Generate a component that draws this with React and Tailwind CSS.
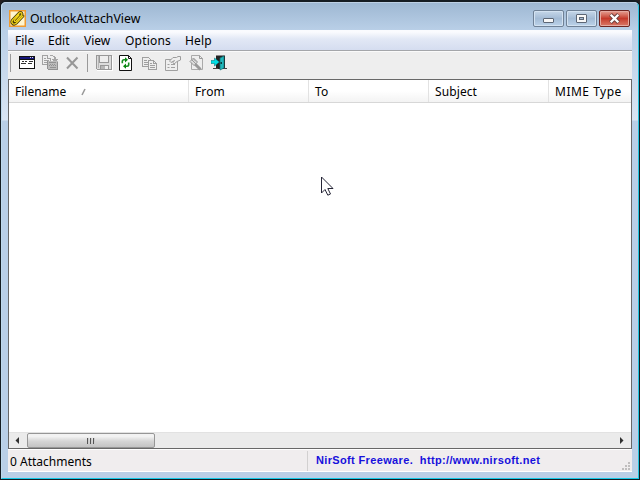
import React from "react";

const menus = [
  ["File", "w-[33px]"],
  ["Edit", "w-[36px]"],
  ["View", "w-[41px]"],
  ["Options", "w-[60px] tracking-[0.2px]"],
  ["Help", "w-[40px] tracking-[0.2px]"],
];

function PaperclipLogo() {
  return (
    <svg width="17" height="17" viewBox="0 0 17 17" className="mt-[3px] shrink-0">
      <rect x="0.75" y="0.75" width="15.5" height="15.5" fill="#fff5cf" stroke="#f09a2e" strokeWidth="1.5" />
      <g fill="none" strokeLinecap="round" strokeLinejoin="round">
        <path d="M10 5L5.8 9.6C4.5 11.2 6 12.2 7.2 11L12.3 5.5C14 3.3 12 1.6 10 3.2L3.8 9.6C1.4 12.6 4.3 15.6 7.2 13.2L14 6" stroke="#403500" strokeWidth="2.8" />
        <path d="M10 5L5.8 9.6C4.5 11.2 6 12.2 7.2 11L12.3 5.5C14 3.3 12 1.6 10 3.2L3.8 9.6C1.4 12.6 4.3 15.6 7.2 13.2L14 6" stroke="#f3d51c" strokeWidth="1.3" />
      </g>
    </svg>
  );
}

function WindowIcon() {
  return (
    <svg width="17" height="16" viewBox="0 0 17 16" shapeRendering="crispEdges">
      <path d="M0 1h16v13H0z" fill="#111" />
      <path d="M1 2h14v2H1z" fill="#16167c" />
      <path d="M1 5h14v8H1z" fill="#fff" />
      <path d="M11 2h1v1h-1zM13 2h1v1h-1z" fill="#ddd" />
      <path d="M3 6h2v1H3zM6 6h2v1H6zM2 8h5v1H2zM10 6h4v1h-4zM9 8h4v1H9z" fill="#333" />
    </svg>
  );
}

function SaveSelectedIcon() {
  return (
    <svg width="17" height="16" viewBox="0 0 17 16" shapeRendering="crispEdges">
      <path d="M0.5 0.5h5v3h3v6h-8zM2 3.5h2M2 5.5h5M2 7.5h5" fill="none" stroke="#a2a2a2" />
      <path d="M8 0h3v1H8zM11 1h2v1h-2zM12 2h2v3h-2zM10 4h6v1h-6zM11 5h4v1h-4z" fill="#a6a6a6" />
      <path d="M5 6h11v9H6l-1-1z" fill="#bcbcbc" />
      <path d="M5 6h1v8H5zM15 7h1v8h-1zM6 14h10v1H6zM7 7h7v1H7zM8 9h1v1H8zM10 9h1v1h-1zM12 9h1v1h-1zM7 10h1v1H7zM9 10h1v1H9zM11 10h1v1h-1zM13 10h1v1h-1zM8 12h6v1H8z" fill="#929292" />
    </svg>
  );
}

function DeleteIcon() {
  return (
    <svg width="14" height="14" viewBox="0 0 14 14">
      <path d="M1 1.5L11.5 12.5M11.5 1.5L1 12.5" stroke="#979797" strokeWidth="2" />
    </svg>
  );
}

function SaveIcon() {
  return (
    <svg width="17" height="16" viewBox="0 0 17 16" shapeRendering="crispEdges">
      <path d="M0.5 0.5h15v14h-14l-1-1z" fill="#dcdcdc" stroke="#989898" />
      <path d="M3.5 0.5h9v7h-9zM4.5 10.5h8v4h-8z" fill="#eee" stroke="#989898" />
      <path d="M5 11h4v3H5zM2 1h1v12H2z" fill="#b6b6b6" />
      <path d="M16 1h1v15H1v-1h15z" fill="#fff" />
    </svg>
  );
}

function RefreshIcon() {
  return (
    <svg width="13" height="16" viewBox="0 0 13 16">
      <path d="M0.5 0.5H9.5L12.5 3.5V15.5H0.5Z" fill="#fff" stroke="#111" />
      <path d="M9.5 0.5V3.5H12.5" fill="none" stroke="#111" />
      <path d="M3.3 8.2V6.5Q3.3 4.8 5 4.8H6.5M9.7 7.5V9.5Q9.7 11.2 8 11.2H6.5" fill="none" stroke="#168b20" strokeWidth="1.6" />
      <path d="M6 2.2L9 4.8L6 7.4ZM7 8.6L4 11.2L7 13.8Z" fill="#07870f" />
    </svg>
  );
}

function CopyIcon() {
  return (
    <svg width="16" height="15" viewBox="0 0 16 15" shapeRendering="crispEdges">
      <path d="M0.5 1.5h6l2 2v7h-8zM2 4.5h3M2 6.5h5M2 8.5h5" fill="#eee" stroke="#a0a0a0" />
      <path d="M6.5 4.5h5l3 3v6h-8zM11.5 4.5v3h3M8 7.5h2M8 9.5h5M8 11.5h5" fill="#eee" stroke="#a0a0a0" />
    </svg>
  );
}

function PropertiesIcon() {
  return (
    <svg width="17" height="15" viewBox="0 0 17 15">
      <path d="M0.5 3.5H12.5V14.5H0.5Z" fill="#eee" stroke="#a0a0a0" />
      <path d="M2.5 8.5h2M6 8.5h4M2.5 11.5h2M6 11.5h4" stroke="#a0a0a0" />
      <path d="M4.5 5L8 1.5H11.5L13 0.5H15.5V4L12 5.5L9 8L8 6.5L9.5 4.5L6 6.5Z" fill="#eee" stroke="#9d9d9d" />
    </svg>
  );
}

function FindIcon() {
  return (
    <svg width="15" height="16" viewBox="0 0 15 16">
      <path d="M2.5 0.5H10.5L13.5 3.5V14.5H2.5Z" fill="#eee" stroke="#aaa" />
      <path d="M10.5 0.5V3.5H13.5" fill="none" stroke="#999" />
      <path d="M6 9L11.5 14.5" stroke="#999" strokeWidth="3" />
      <path d="M4.5 3L8.5 7L5 10.5L1 6.5Z" fill="#ddd" stroke="#969696" />
      <path d="M3 5L7 9M4.5 4L7 6.5" stroke="#999" />
    </svg>
  );
}

function ExitIcon() {
  return (
    <svg width="16" height="16" viewBox="0 0 16 16">
      <path d="M5 0.5H14V14H5Z" fill="#222" />
      <path d="M9 3L13 1V13L9 15Z" fill="#20b8bc" stroke="#126c70" strokeWidth="0.7" />
      <path d="M9.5 7H11V9H9.5Z" fill="#063e40" />
      <path d="M13 13.5h3M2 13.5h5" stroke="#444" />
      <path d="M0 5.5H3.5V3L8.3 7L3.5 11V8.5H0Z" fill="#00e0e6" stroke="#087c83" strokeWidth="0.6" />
    </svg>
  );
}

function Caption({ type }) {
  const close = type === "close";
  return (
    <div
      className={
        close
          ? "flex h-[17px] w-[31px] items-center justify-center rounded-[2px] border border-[#6f2520] bg-linear-to-b from-[#e4a094] from-0% via-[#c53a2b] via-50% to-[#d97868] shadow-[inset_0_0_0_1px_#e5aaa0]"
          : "flex h-[17px] w-[31px] items-center justify-center rounded-[2px] border border-[#6f8196] bg-linear-to-b from-[#c6d7e9] from-0% via-[#a3bbd5] via-50% to-[#bcd3ea] shadow-[inset_0_0_0_1px_#d3e2f1]"
      }
    >
      {type === "min" && <div className="mt-[4px] h-[5px] w-[11px] rounded-[1px] border border-[#5c6675] bg-[#f7f7f7]" />}
      {type === "max" && (
        <div className="flex h-[9px] w-[11px] items-center justify-center rounded-[1px] border border-[#5c6675] bg-[#f7f7f7]">
          <div className="h-[3px] w-[5px] border border-[#5c6675] bg-[#a5bad1]" />
        </div>
      )}
      {close && (
        <svg width="13" height="11" viewBox="0 0 13 11">
          <path d="M2.5 1.5L10.5 9.5M10.5 1.5L2.5 9.5" stroke="#69413e" strokeWidth="4" />
          <path d="M2.7 1.7L10.3 9.3M10.3 1.7L2.7 9.3" stroke="#fff" strokeWidth="2.3" />
        </svg>
      )}
    </div>
  );
}

function Tool({ width, children }) {
  return <div className={`${width} flex h-[26px] shrink-0 items-center`}>{children}</div>;
}

function ScrollArrow({ right }) {
  return (
    <svg width="18" height="15" viewBox="0 0 18 15" className="shrink-0">
      <path d={right ? "M7 4V11L10.5 7.5Z" : "M10 4V11L6.5 7.5Z"} fill="#303030" />
    </svg>
  );
}

export default function App() {
  return (
    <div className="relative h-[480px] w-[640px] overflow-hidden bg-[#252022] font-['Noto_Sans','Open_Sans',sans-serif] text-[12px] leading-none text-black">
      <div className="flex h-[480px] w-[640px] flex-col rounded-t-[6px] border border-t-2 border-[#151c22] bg-[linear-gradient(to_bottom,#9db7d2_0px,#b9cfe7_28px,#d9e5f3_118px,#b9cfe7_119px)]">
        <div className="flex h-[477px] flex-col rounded-t-[5px] border border-t-[#bdd0e4] border-r-[#24c4df] border-b-[#13c8e7] border-l-[#bed9ec] px-[6px]">
          <header className="flex h-[27px] shrink-0 items-center pr-[2px] pl-[1px]">
            <PaperclipLogo />
            <h1 className="mt-[5px] ml-[4px] flex-1 text-[12.3px] font-normal whitespace-nowrap">OutlookAttachView</h1>
            <div className="mt-[4px] flex gap-[2px]">
              <Caption type="min" />
              <Caption type="max" />
              <Caption type="close" />
            </div>
          </header>
          <div className="flex h-[442px] shrink-0 flex-col bg-[#eee]">
            <nav className="flex h-[20px] shrink-0 items-center bg-linear-to-b from-[#fafbfe] from-10% via-[#e2e8f5] via-45% to-[#d5ddf0] pt-px pl-[7px]">
              {menus.map(([name, style]) => (
                <span key={name} className={`${style} whitespace-nowrap`}>{name}</span>
              ))}
            </nav>
            <div className="h-[2px] shrink-0 border-t border-[#a4a6aa] bg-[#fafafa]" />
            <div className="flex h-[27px] shrink-0 items-start bg-[#eee] pl-[2px]">
              <div className="mt-[2px] mr-[8px] h-[18px] w-px bg-[#999]" />
              <div className="-mt-[2px] flex">
                <Tool width="w-[23px]"><WindowIcon /></Tool>
                <Tool width="w-[24px]"><SaveSelectedIcon /></Tool>
                <Tool width="w-[21px]"><DeleteIcon /></Tool>
                <Tool width="w-[9px]"><div className="h-[18px] w-px bg-[#999]" /></Tool>
                <Tool width="w-[23px]"><SaveIcon /></Tool>
                <Tool width="w-[23px]"><RefreshIcon /></Tool>
                <Tool width="w-[23px]"><CopyIcon /></Tool>
                <Tool width="w-[24px]"><PropertiesIcon /></Tool>
                <Tool width="w-[22px]"><FindIcon /></Tool>
                <Tool width="w-[20px]"><ExitIcon /></Tool>
              </div>
            </div>
            <main className="flex h-[370px] shrink-0 flex-col border border-[#686868] bg-white">
              <div className="flex h-[23px] shrink-0 border-b border-[#d7d7d7] bg-linear-to-b from-white from-50% to-[#f3f3f3]">
                <div className="flex w-[180px] items-center border-r border-[#e2e2e2] pt-[2px] pl-[6px]">
                  <span className="w-[66px]">Filename</span>
                  <svg width="6" height="8" viewBox="0 0 6 8"><path d="M1 7L4 1" stroke="#999" strokeWidth="1.5" /></svg>
                </div>
                {["From", "To", "Subject"].map((label) => (
                  <div key={label} className="flex w-[120px] items-center border-r border-[#e2e2e2] pt-[2px] pl-[6px] tracking-[0.1px]">{label}</div>
                ))}
                <div className="flex flex-1 items-center pt-[2px] pl-[6px] tracking-[0.5px] whitespace-nowrap">MIME Type</div>
              </div>
              <div className="flex-1" />
              <div className="flex h-[16px] shrink-0 items-center justify-between border-t border-[#e2e2e2] bg-[#ebebeb]">
                <div className="flex items-center">
                  <ScrollArrow />
                  <div className="flex h-[15px] w-[128px] items-center justify-center gap-px rounded-[2px] border border-[#969696] bg-linear-to-b from-[#f2f2f2] from-20% via-[#d5d5d5] via-55% to-[#c3c3c3]">
                    {[0, 1, 2].map((grip) => <div key={grip} className="h-[6px] w-[2px] border-l border-[#555] bg-[#ccc]" />)}
                  </div>
                </div>
                <ScrollArrow right />
              </div>
            </main>
            <footer className="flex h-[23px] shrink-0 border-t border-b border-[#fff] bg-[#f0edee]">
              <div className="mt-[1px] flex h-[20px] w-[300px] items-center border-r border-[#d2d0d0] pt-[2px] pl-[2px]">0 Attachments</div>
              <div className="flex flex-1 items-center justify-between pl-[8px] font-['Liberation_Sans',Arial,sans-serif] text-[11px] font-bold tracking-[0.35px] text-[#1710dc]">
                <span className="whitespace-pre">NirSoft Freeware.  http://www.nirsoft.net</span>
                <svg width="10" height="10" viewBox="0 0 10 10" className="mr-px self-end" shapeRendering="crispEdges">
                  <path d="M7 1h2v2H7zM4 4h2v2H4zM7 4h2v2H7zM1 7h2v2H1zM4 7h2v2H4zM7 7h2v2H7z" fill="#c0bebe" />
                </svg>
              </div>
            </footer>
          </div>
        </div>
      </div>
      <svg width="14" height="21" viewBox="0 0 14 21" className="absolute top-[176px] left-[321px]">
        <path d="M0.5 1V17L4 13.5L6.8 19.2L9.5 18L6.8 12.5H12Z" fill="#fff" stroke="#252536" />
      </svg>
    </div>
  );
}
